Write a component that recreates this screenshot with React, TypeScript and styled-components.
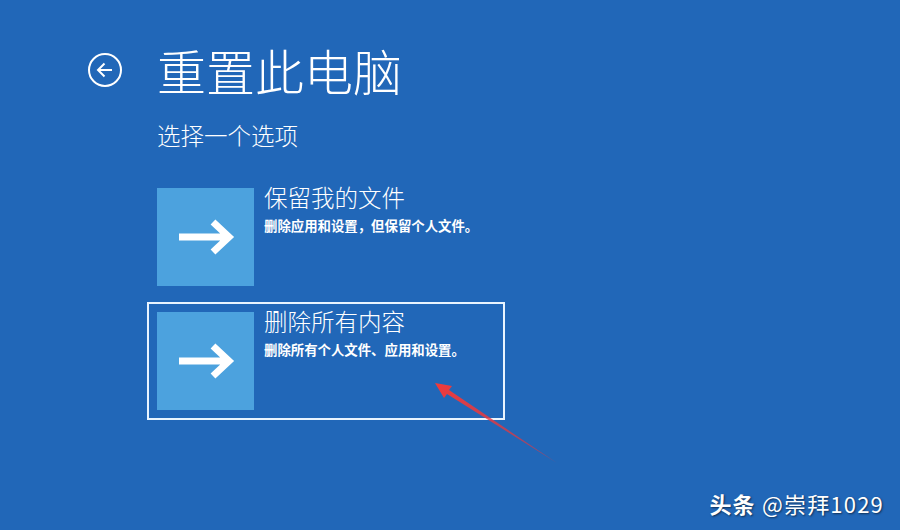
import React from 'react';
import styled, { createGlobalStyle } from 'styled-components';

const GlobalStyle = createGlobalStyle`
  html, body {
    margin: 0;
    padding: 0;
    background: #2167b8;
  }
  * {
    box-sizing: border-box;
  }
`;

const Screen = styled.div`
  position: relative;
  width: 900px;
  height: 530px;
  overflow: hidden;
  background: #2167b8;
  color: #ffffff;
  font-family: 'Noto Sans CJK SC', 'Noto Sans', sans-serif;
  padding: 40px 0 0 88px;
`;

const Header = styled.div`
  display: flex;
  align-items: center;
  gap: 35px;
  height: 60px;
`;

const BackButton = styled.button`
  width: 34px;
  height: 34px;
  padding: 0;
  border: 2px solid #ffffff;
  border-radius: 50%;
  background: transparent;
  display: flex;
  align-items: center;
  justify-content: center;
  cursor: pointer;
`;

const Title = styled.h1`
  margin: 0;
  font-size: 49px;
  font-weight: 300;
  line-height: 60px;
  letter-spacing: 0;
`;

const Body = styled.div`
  padding-left: 69px;
  display: flex;
  flex-direction: column;
`;

const Prompt = styled.div`
  margin-top: 18px;
  font-size: 23.5px;
  font-weight: 300;
  line-height: 34px;
`;

const Options = styled.div`
  margin-top: 26px;
  margin-left: -10px;
  display: flex;
  flex-direction: column;
  gap: 6px;
`;

const Option = styled.div<{ $selected?: boolean }>`
  width: 358px;
  height: 118px;
  padding: 8px;
  border: 2px solid ${(p) => (p.$selected ? '#e8f4ff' : 'transparent')};
  display: flex;
  gap: 10px;
  cursor: pointer;
`;

const Tile = styled.div`
  width: 97px;
  height: 98px;
  flex: none;
  background: #4ca2de;
  display: flex;
  align-items: center;
  justify-content: center;
`;

const OptionText = styled.div`
  display: flex;
  flex-direction: column;
`;

const OptionTitle = styled.div`
  font-size: 23.5px;
  font-weight: 300;
  line-height: 26px;
  margin-top: -4px;
`;

const OptionDesc = styled.div`
  font-size: 13.4px;
  font-weight: 700;
  line-height: 16px;
  margin-top: 7px;
`;

const Overlay = styled.svg`
  position: absolute;
  left: 0;
  top: 0;
  pointer-events: none;
`;

const Watermark = styled.div`
  position: absolute;
  right: 16px;
  bottom: 14px;
  font-family: 'Noto Sans CJK SC', 'Noto Sans', sans-serif;
  font-size: 22px;
  line-height: 26px;
  letter-spacing: 1.2px;
  color: #ffffff;
  text-shadow: 1px 1px 2px rgba(0, 0, 0, 0.55);
  white-space: nowrap;

  b {
    font-weight: 700;
  }
`;

const ArrowRight = () => (
  <svg width="58" height="36" viewBox="0 0 58 36">
    <path d="M2 18 H51 M36 3 L52 18 L36 33" fill="none" stroke="#ffffff" strokeWidth="7" strokeLinejoin="miter" />
  </svg>
);

const BackIcon = () => (
  <svg width="20" height="20" viewBox="0 0 20 20">
    <path d="M3 10 H17 M9.5 3.5 L3 10 L9.5 16.5" fill="none" stroke="#ffffff" strokeWidth="2" />
  </svg>
);

const options = [
  { title: '保留我的文件', desc: '删除应用和设置，但保留个人文件。' },
  { title: '删除所有内容', desc: '删除所有个人文件、应用和设置。', selected: true },
];

const App: React.FC = () => {
  return (
    <>
      <GlobalStyle />
      <Screen>
        <Header>
          <BackButton aria-label="back">
            <BackIcon />
          </BackButton>
          <Title>重置此电脑</Title>
        </Header>
        <Body>
          <Prompt>选择一个选项</Prompt>
          <Options>
            {options.map((o) => (
              <Option key={o.title} $selected={o.selected}>
                <Tile>
                  <ArrowRight />
                </Tile>
                <OptionText>
                  <OptionTitle>{o.title}</OptionTitle>
                  <OptionDesc>{o.desc}</OptionDesc>
                </OptionText>
              </Option>
            ))}
          </Options>
        </Body>

        <Overlay width="900" height="530" viewBox="0 0 900 530">
          <defs>
            <linearGradient id="redArrow" x1="557" y1="463" x2="435" y2="383" gradientUnits="userSpaceOnUse">
              <stop offset="0" stopColor="#e8333a" stopOpacity="0.55" />
              <stop offset="1" stopColor="#f23a3a" />
            </linearGradient>
          </defs>
          <polygon points="557,463 447,394 444,398 435,383 452,386 449,390" fill="url(#redArrow)" />
        </Overlay>

        <Watermark>
          <b>头条</b> @崇拜1029
        </Watermark>
      </Screen>
    </>
  );
};

export default App;
